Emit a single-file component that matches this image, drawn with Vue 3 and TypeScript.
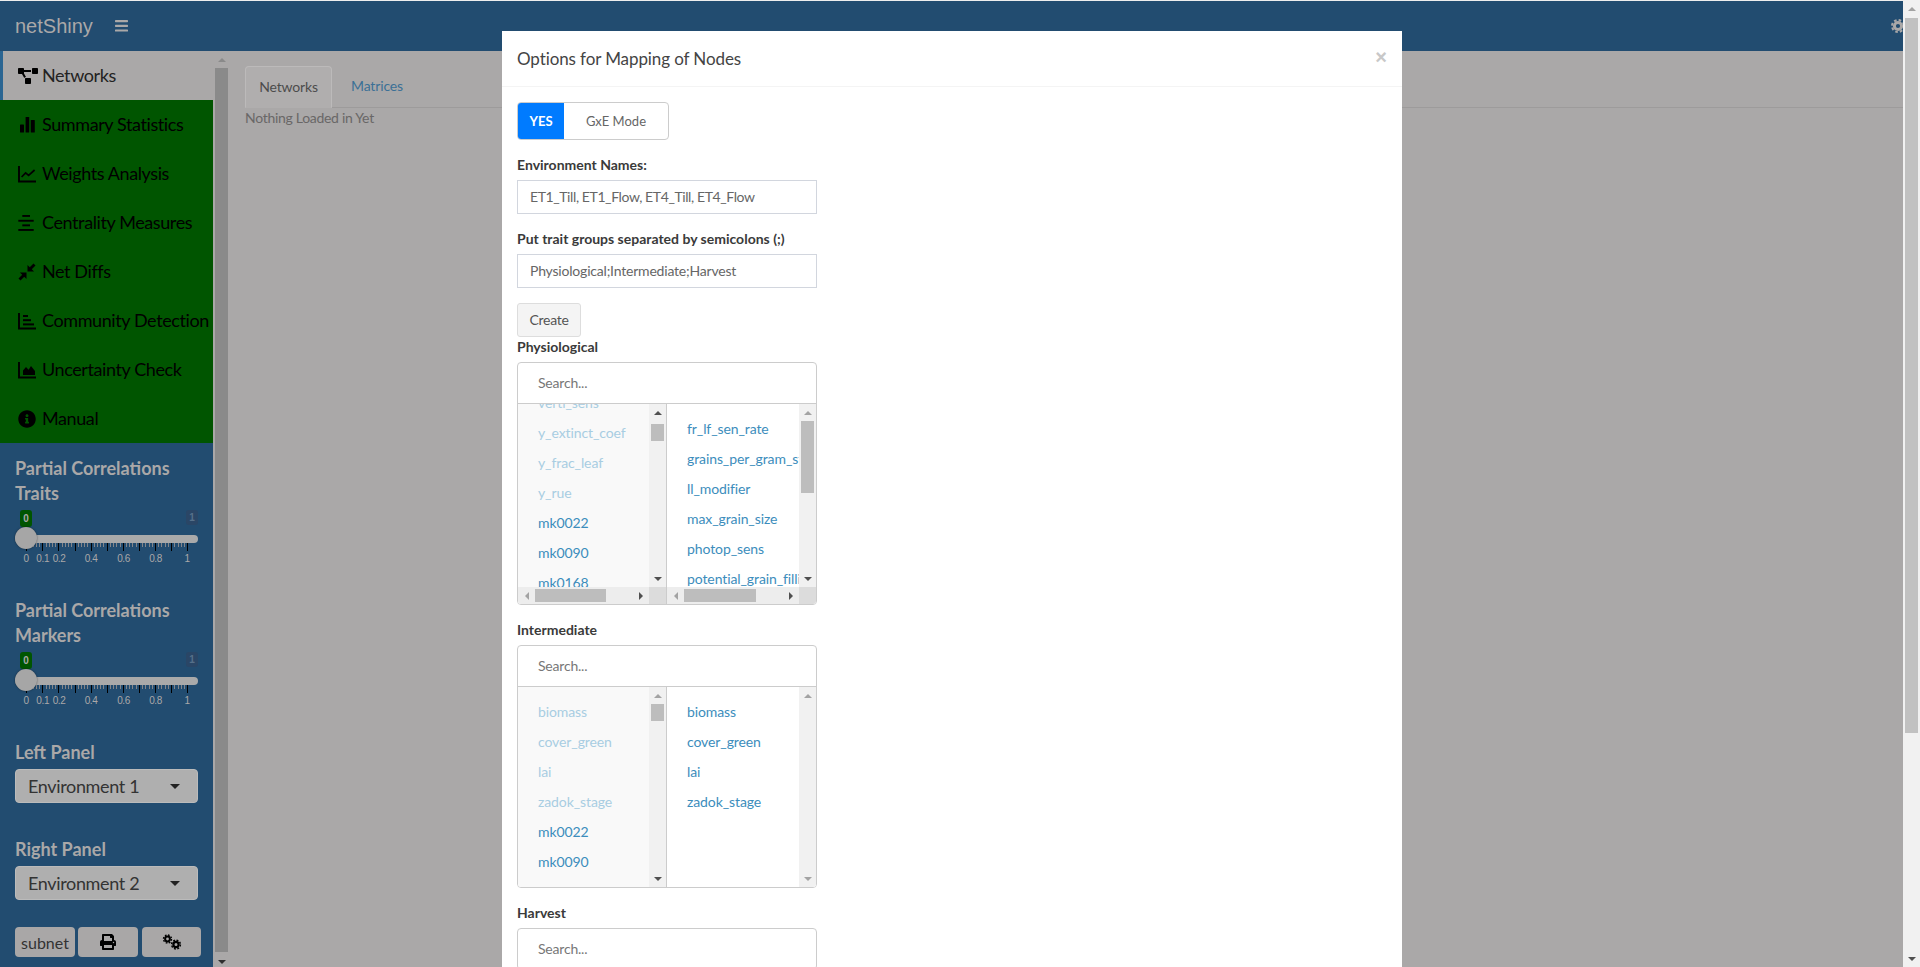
<script setup lang="ts">
interface ListCol {
  items: { label: string; off?: boolean }[];
  offset: number;
  thumbTop: number | null;
  thumbHeight: number;
  upActive: boolean;
  downActive: boolean;
  hThumbLeft?: number;
  hThumbWidth?: number;
}
interface Group {
  name: string;
  hbar: boolean;
  left: ListCol;
  right: ListCol;
}

const menu = [
  { label: 'Summary Statistics', icon: 'bars' },
  { label: 'Weights Analysis', icon: 'line' },
  { label: 'Centrality Measures', icon: 'align' },
  { label: 'Net Diffs', icon: 'compress' },
  { label: 'Community Detection', icon: 'hbars' },
  { label: 'Uncertainty Check', icon: 'area' },
  { label: 'Manual', icon: 'info' },
];

const sliderNames = [
  ['Partial Correlations', 'Traits'],
  ['Partial Correlations', 'Markers'],
];
const majorTicks = [0, 1, 2, 3, 4, 5, 6, 7, 8, 9, 10].map((i) => Math.round(11.2 + i * 16.1) + 0.5);
const minorTicks: number[] = [];
for (let i = 0; i < 10; i++) {
  for (let j = 1; j < 5; j++) minorTicks.push(Math.round(11.2 + i * 16.1 + (j * 16.1) / 5) + 0.5);
}
const tickLabels = [
  { t: '0', x: 11 },
  { t: '0.1', x: 27.7 },
  { t: '0.2', x: 44 },
  { t: '0.4', x: 76 },
  { t: '0.6', x: 108.5 },
  { t: '0.8', x: 140.5 },
  { t: '1', x: 172 },
];

const groups: Group[] = [
  {
    name: 'Physiological',
    hbar: true,
    left: {
      items: [
        { label: 'verti_sens', off: true },
        { label: 'y_extinct_coef', off: true },
        { label: 'y_frac_leaf', off: true },
        { label: 'y_rue', off: true },
        { label: 'mk0022' },
        { label: 'mk0090' },
        { label: 'mk0168' },
      ],
      offset: -16,
      thumbTop: 3,
      thumbHeight: 17,
      upActive: true,
      downActive: true,
      hThumbLeft: 0,
      hThumbWidth: 71,
    },
    right: {
      items: [
        { label: 'fr_lf_sen_rate' },
        { label: 'grains_per_gram_stem' },
        { label: 'll_modifier' },
        { label: 'max_grain_size' },
        { label: 'photop_sens' },
        { label: 'potential_grain_filling' },
      ],
      offset: 10,
      thumbTop: 0,
      thumbHeight: 72,
      upActive: false,
      downActive: true,
      hThumbLeft: 0,
      hThumbWidth: 72,
    },
  },
  {
    name: 'Intermediate',
    hbar: false,
    left: {
      items: [
        { label: 'biomass', off: true },
        { label: 'cover_green', off: true },
        { label: 'lai', off: true },
        { label: 'zadok_stage', off: true },
        { label: 'mk0022' },
        { label: 'mk0090' },
      ],
      offset: 10,
      thumbTop: 0,
      thumbHeight: 17,
      upActive: false,
      downActive: true,
    },
    right: {
      items: [
        { label: 'biomass' },
        { label: 'cover_green' },
        { label: 'lai' },
        { label: 'zadok_stage' },
      ],
      offset: 10,
      thumbTop: null,
      thumbHeight: 0,
      upActive: false,
      downActive: false,
    },
  },
];
</script>

<template>
  <div class="app">
    <div class="page">
      <div class="strip"></div>
      <header class="topbar">
        <span class="brand">netShiny</span>
        <svg class="burger" width="13" height="12" viewBox="0 0 13 12">
          <rect y="0" width="13" height="2.2" rx="0.6" />
          <rect y="4.7" width="13" height="2.2" rx="0.6" />
          <rect y="9.4" width="13" height="2.2" rx="0.6" />
        </svg>
        <svg class="topgear" width="14" height="14" viewBox="0 0 14 14">
          <circle cx="7" cy="7" r="3.6" fill="none" stroke="#aaa8a8" stroke-width="3" />
          <circle cx="7" cy="7" r="6" fill="none" stroke="#aaa8a8" stroke-width="2" stroke-dasharray="2.6 2.1" />
        </svg>
      </header>
      <div class="body">
        <aside class="sidebar">
          <nav class="menu">
            <a class="item active">
              <svg class="ico net" width="20" height="16" viewBox="0 0 640 512">
                <path d="M384 320H256c-17.67 0-32 14.33-32 32v128c0 17.67 14.33 32 32 32h128c17.67 0 32-14.33 32-32V352c0-17.67-14.33-32-32-32zM192 32c0-17.67-14.33-32-32-32H32C14.33 0 0 14.33 0 32v128c0 17.67 14.33 32 32 32h95.72l73.16 128.04C211.98 300.98 232.4 288 256 288h.28L192 175.51V128h224V64H192V32zM608 0H480c-17.67 0-32 14.33-32 32v128c0 17.67 14.33 32 32 32h128c17.67 0 32-14.33 32-32V32c0-17.67-14.33-32-32-32z" />
              </svg>
              <span>Networks</span>
            </a>
            <a v-for="m in menu" :key="m.label" class="item">
              <svg class="ico" width="18" height="18" viewBox="0 0 18 18">
                <g v-if="m.icon === 'bars'">
                  <rect x="2" y="8.5" width="4" height="8" rx="0.6" />
                  <rect x="7.6" y="1" width="3.6" height="15.5" rx="0.6" />
                  <rect x="12.8" y="4" width="4" height="12.5" rx="0.6" />
                </g>
                <g v-else-if="m.icon === 'line'">
                  <path d="M1 1v15.5h17" fill="none" stroke="#000" stroke-width="1.9" />
                  <path d="M3.6 12l4-4.2 3 2.6 6-5.4" fill="none" stroke="#000" stroke-width="1.7" />
                </g>
                <g v-else-if="m.icon === 'align'">
                  <rect x="4.3" y="1" width="7.7" height="1.9" />
                  <rect x="0.3" y="5.8" width="15.4" height="1.9" />
                  <rect x="4.3" y="10.4" width="7.7" height="1.9" />
                  <rect x="0.3" y="15" width="15.4" height="1.9" />
                </g>
                <g v-else-if="m.icon === 'compress'">
                  <path d="M1.5 16.5L6.5 11.5" stroke="#000" stroke-width="2.8" />
                  <path d="M8.5 9.5v6.6L1.9 9.5z" />
                  <path d="M11.5 6.5L16.5 1.5" stroke="#000" stroke-width="2.8" />
                  <path d="M9.5 8.5V1.9l6.6 6.6z" />
                </g>
                <g v-else-if="m.icon === 'hbars'">
                  <path d="M1 1v15.5h17" fill="none" stroke="#000" stroke-width="1.9" />
                  <rect x="5" y="3" width="5" height="2" />
                  <rect x="5" y="7.2" width="8" height="2" />
                  <rect x="5" y="11.4" width="11" height="2" />
                </g>
                <g v-else-if="m.icon === 'area'">
                  <path d="M1 1v15.5h17" fill="none" stroke="#000" stroke-width="1.9" />
                  <path d="M5 14V9.5l3-3.5 2.6 2.8L13 5l4 5v4z" />
                </g>
                <g v-else>
                  <path transform="scale(0.0352)" d="M256 8C119.043 8 8 119.083 8 256c0 136.997 111.043 248 248 248s248-111.003 248-248C504 119.083 392.957 8 256 8zm0 110c23.196 0 42 18.804 42 42s-18.804 42-42 42-42-18.804-42-42 18.804-42 42-42zm56 254c0 6.627-5.373 12-12 12h-88c-6.627 0-12-5.373-12-12v-24c0-6.627 5.373-12 12-12h12v-64h-12c-6.627 0-12-5.373-12-12v-24c0-6.627 5.373-12 12-12h64c6.627 0 12 5.373 12 12v100h12c6.627 0 12 5.373 12 12v24z" />
                </g>
              </svg>
              <span>{{ m.label }}</span>
            </a>
          </nav>
          <div class="controls">
            <div v-for="(s, idx) in sliderNames" :key="idx" class="slider-block">
              <div class="ctl-label">{{ s[0] }}<br />{{ s[1] }}</div>
              <div class="slider">
                <div class="bubbles">
                  <span class="bubble-from">0</span>
                  <span class="bubble-max">1</span>
                </div>
                <div class="track"></div>
                <svg class="ticks" width="183" height="9" viewBox="0 0 183 9">
                  <line v-for="t in minorTicks" :key="'m' + t" :x1="t" :x2="t" y1="0" y2="4" stroke="#84868a" stroke-width="1" />
                  <line v-for="t in majorTicks" :key="'M' + t" :x1="t" :x2="t" y1="0" y2="8" stroke="#000" stroke-width="1" />
                </svg>
                <div class="handle"></div>
                <div class="tick-labels">
                  <span v-for="l in tickLabels" :key="l.t" :style="{ left: l.x + 'px' }">{{ l.t }}</span>
                </div>
              </div>
            </div>
            <div class="ctl-label panel-first">Left Panel</div>
            <div class="select">
              <span>Environment 1</span><i class="caret"></i>
            </div>
            <div class="ctl-label panel-second">Right Panel</div>
            <div class="select">
              <span>Environment 2</span><i class="caret"></i>
            </div>
            <div class="buttons">
              <button class="sb-btn subnet">subnet</button>
              <button class="sb-btn b2">
                <svg width="16" height="16" viewBox="0 0 512 512">
                  <path d="M448 192V77.25c0-8.49-3.37-16.62-9.37-22.63L393.37 9.37c-6-6-14.14-9.37-22.63-9.37H96C78.33 0 64 14.33 64 32v160c-35.35 0-64 28.65-64 64v112c0 8.84 7.16 16 16 16h48v96c0 17.67 14.33 32 32 32h320c17.67 0 32-14.33 32-32v-96h48c8.84 0 16-7.16 16-16V256c0-35.35-28.65-64-64-64zm-64 256H128v-96h256v96zm0-224H128V64h192v48c0 8.84 7.16 16 16 16h48v96zm48 72c-13.25 0-24-10.75-24-24 0-13.26 10.75-24 24-24s24 10.74 24 24c0 13.25-10.75 24-24 24z" />
                </svg>
              </button>
              <button class="sb-btn b3">
                <svg width="20" height="16" viewBox="0 0 20 16">
                  <circle cx="5.5" cy="5" r="2.4" fill="none" stroke="#000" stroke-width="2" />
                  <circle cx="5.5" cy="5" r="4" fill="none" stroke="#000" stroke-width="1.4" stroke-dasharray="1.7 1.44" />
                  <circle cx="14" cy="10.5" r="2.6" fill="none" stroke="#000" stroke-width="2.2" />
                  <circle cx="14" cy="10.5" r="4.4" fill="none" stroke="#000" stroke-width="1.5" stroke-dasharray="1.9 1.56" />
                </svg>
              </button>
            </div>
          </div>
        </aside>
        <div class="side-scroll">
          <i class="arrow up faint"></i>
          <div class="side-track"><div class="side-thumb"></div></div>
          <i class="arrow down dark"></i>
        </div>
        <main class="main">
          <div class="tabs">
            <span class="tab active-tab">Networks</span>
            <span class="tab link-tab">Matrices</span>
          </div>
          <p class="nothing">Nothing Loaded in Yet</p>
        </main>
      </div>
    </div>

    <div class="page-scroll">
      <i class="sc-arrow up-g"></i>
      <div class="page-track"><div class="page-thumb"></div></div>
      <i class="sc-arrow down-d"></i>
    </div>

    <section class="modal">
      <div class="modal-head">
        <h4>Options for Mapping of Nodes</h4>
        <span class="close">×</span>
      </div>
      <div class="modal-body">
        <div class="switch">
          <span class="sw-on">YES</span>
          <span class="sw-label">GxE Mode</span>
        </div>
        <label class="lbl">Environment Names:</label>
        <div class="input tightest">ET1_Till, ET1_Flow, ET4_Till, ET4_Flow</div>
        <label class="lbl">Put trait groups separated by semicolons (;)</label>
        <div class="input">Physiological;Intermediate;Harvest</div>
        <button class="create">Create</button>
        <template v-for="g in groups" :key="g.name">
          <label class="lbl tight">{{ g.name }}</label>
          <div class="multi">
            <div class="search">Search...</div>
            <div class="cols">
              <div v-for="side in (['left', 'right'] as const)" :key="side" class="col" :class="side">
                <div class="col-top">
                  <div class="list">
                    <div class="list-inner" :style="{ marginTop: g[side].offset + 'px' }">
                      <div v-for="it in g[side].items" :key="it.label" class="opt" :class="{ off: it.off }">{{ it.label }}</div>
                    </div>
                  </div>
                  <div class="vbar">
                    <i class="tri up-t" :class="{ on: g[side].upActive }"></i>
                    <div class="vtrack">
                      <div v-if="g[side].thumbTop !== null" class="vthumb" :style="{ marginTop: g[side].thumbTop + 'px', height: g[side].thumbHeight + 'px' }"></div>
                    </div>
                    <i class="tri down-t" :class="{ on: g[side].downActive }"></i>
                  </div>
                </div>
                <div v-if="g.hbar" class="hbar">
                  <i class="tri left-t"></i>
                  <div class="htrack">
                    <div class="hthumb" :style="{ width: g[side].hThumbWidth + 'px' }"></div>
                  </div>
                  <i class="tri right-t"></i>
                  <div class="corner"></div>
                </div>
              </div>
            </div>
          </div>
        </template>
        <label class="lbl tight">Harvest</label>
        <div class="multi">
          <div class="search">Search...</div>
        </div>
      </div>
    </section>
  </div>
</template>

<style>
html, body { margin: 0; overflow: hidden; background: #aaa8a8; }
</style>

<style scoped>
.app {
  width: 1920px;
  height: 967px;
  display: flex;
  overflow: hidden;
  position: relative;
  font-family: "Lato", "Noto Sans", sans-serif;
  color: #333;
  background: #aaa8a8;
}
.page { flex: 1; min-width: 0; display: flex; flex-direction: column; }
.strip { height: 1px; background: #eeeeee; }
.topbar {
  height: 50px;
  background: #224c70;
  display: flex;
  align-items: center;
  padding-left: 15px;
  position: relative;
  overflow: hidden;
}
.brand { font-family: "Liberation Sans", Arial, sans-serif; font-size: 20px; color: #aaa8a8; width: 100px; }
.burger { fill: #aaa8a8; }
.topgear { margin-left: auto; margin-right: -2px; }
.body { flex: 1; display: flex; min-height: 0; }
.sidebar { width: 213px; background: #224c70; display: flex; flex-direction: column; flex: none; }
.menu { display: flex; flex-direction: column; background: #005500; }
.item {
  height: 49px;
  box-sizing: border-box;
  display: flex;
  align-items: center;
  padding-left: 18px;
  font-size: 18px;
  letter-spacing: -0.4px;
  color: #000;
  white-space: nowrap;
}
.item span { margin-top: -2px; }
.ico { flex: none; fill: #000; margin-right: 6px; }
.ico.net { margin-right: 4px; }
.item.active {
  background: #aaa8a8;
  color: #222;
  border-left: 3px solid #2a6592;
  padding-left: 15px;
}
.controls { padding: 13px 15px 0; display: flex; flex-direction: column; }
.slider-block { height: 142px; }
.ctl-label { font-size: 18px; line-height: 25px; font-weight: 700; color: #aaa8a8; }
.slider { position: relative; height: 70px; width: 183px; }
.bubbles { display: flex; justify-content: space-between; padding: 4px 0 0 5px; height: 17px; font-family: "Liberation Sans", Arial, sans-serif; }
.bubble-from { width: 12px; height: 17px; line-height: 17px; background: #005500; color: #aaa8a8; font-size: 10px; font-weight: 700; text-align: center; border-radius: 3px; }
.bubble-max { width: 12px; height: 15px; line-height: 15px; background: #2a4666; color: #56708a; font-size: 10px; font-weight: 700; text-align: center; border-radius: 3px; }
.track { position: absolute; left: 0; right: 0; top: 29px; height: 8px; border-radius: 4px; background: #aaaaaa; }
.handle { position: absolute; left: 0; top: 21px; width: 22px; height: 22px; border-radius: 50%; background: #a6a6a6; box-shadow: 0 0 2px rgba(0, 0, 0, .5); }
.ticks { position: absolute; left: 0; top: 37px; }
.tick-labels { position: absolute; left: 0; top: 46px; width: 183px; height: 14px; font-family: "Liberation Sans", Arial, sans-serif; font-size: 10px; letter-spacing: -0.4px; line-height: 14px; color: #aaa8a8; }
.tick-labels span { position: absolute; transform: translateX(-50%); }
.panel-first { margin-bottom: 4px; }
.select {
  height: 34px;
  box-sizing: border-box;
  background: #afafaf;
  border: 1px solid #bbb;
  border-radius: 4px;
  display: flex;
  align-items: center;
  justify-content: space-between;
  padding: 0 17px 0 12px;
  font-size: 18px;
  letter-spacing: -0.35px;
  color: #333;
}
.caret { width: 0; height: 0; border-left: 5px solid transparent; border-right: 5px solid transparent; border-top: 5px solid #222; }
.panel-second { margin-top: 34px; margin-bottom: 4px; }
.buttons { display: flex; margin-top: 27px; height: 30px; width: 186px; }
.sb-btn {
  height: 30px;
  border: none;
  border-radius: 4px;
  background: #a9a7a7;
  padding: 0;
  display: flex;
  align-items: center;
  justify-content: center;
  font-family: inherit;
  font-size: 16px;
  color: #333;
}
.subnet { width: 60px; }
.b2 { width: 60px; margin-left: 3px; }
.b3 { width: 59px; margin-left: 4px; }
.side-scroll { width: 15px; box-sizing: border-box; padding-left: 2px; flex: none; display: flex; flex-direction: column; align-items: stretch; }
.side-track { flex: 1; }
.side-thumb { height: 884px; background: #8a8a8a; }
.arrow { height: 17px; display: flex; }
.arrow::after { content: ""; margin: auto; width: 0; height: 0; border-left: 4px solid transparent; border-right: 4px solid transparent; }
.arrow.up::after { border-bottom: 4px solid #8a8a8a; }
.arrow.down { height: 10px; }
.arrow.down::after { border-top: 4px solid #2e2e2e; }
.main { flex: 1; padding: 15px 0 0 17px; min-width: 0; }
.tabs { display: flex; height: 42px; box-sizing: border-box; border-bottom: 1px solid #9d9b9b; }
.tab { font-size: 14px; height: 42px; box-sizing: border-box; line-height: 40px; padding: 0 16px; letter-spacing: -0.15px; }
.active-tab { background: #b0aeae; border: 1px solid #bcbaba; border-bottom-color: #b0aeae; border-radius: 4px 4px 0 0; color: #4c4c4c; width: 87px; text-align: center; padding: 0; }
.link-tab { color: #3b7096; margin-left: 3px; }
.nothing { margin: 0; font-size: 14px; line-height: 20px; color: #696767; letter-spacing: -0.3px; }

.page-scroll { width: 17px; background: #f1f1f1; display: flex; flex-direction: column; flex: none; }
.sc-arrow { height: 17px; display: flex; }
.sc-arrow::after { content: ""; margin: auto; width: 0; height: 0; border-left: 4px solid transparent; border-right: 4px solid transparent; }
.up-g::after { border-bottom: 4px solid #a3a3a3; }
.down-d::after { border-top: 4px solid #505050; }
.page-track { flex: 1; padding: 1px 2px 0; }
.page-thumb { height: 715px; background: #c1c1c1; }

.modal {
  position: absolute;
  left: 502px;
  top: 31px;
  width: 900px;
  height: 936px;
  background: #fff;
  overflow: hidden;
}
.modal-head {
  height: 56px;
  box-sizing: border-box;
  border-bottom: 1px solid #f4f4f4;
  display: flex;
  align-items: center;
  justify-content: space-between;
  padding: 0 15px;
}
.modal-head h4 { margin: 0; font-size: 17px; font-weight: 400; color: #444; letter-spacing: -0.1px; }
.close { font-size: 20px; font-weight: 700; color: #c8c8c8; font-family: "Liberation Sans", Arial, sans-serif; margin-top: -3px; }
.modal-body { padding: 15px 15px 0; display: flex; flex-direction: column; align-items: flex-start; }
.switch {
  height: 38px;
  width: 152px;
  box-sizing: border-box;
  border: 1px solid #ccc;
  border-radius: 4px;
  display: flex;
  overflow: hidden;
  font-size: 13px;
  line-height: 36px;
  text-align: center;
}
.sw-on { width: 46px; background: #007bff; color: #fff; font-weight: 700; }
.sw-label { flex: 1; color: #666; }
.lbl { display: block; font-size: 14px; font-weight: 700; line-height: 20px; margin: 15px 0 5px; color: #3a3a3a; }
.lbl.tight { margin-top: 0; }
.input {
  width: 300px;
  height: 34px;
  box-sizing: border-box;
  border: 1px solid #d2d6de;
  padding: 0 12px;
  font-size: 14px;
  line-height: 32px;
  color: #666;
  letter-spacing: -0.2px;
}
.input.tightest { letter-spacing: -0.4px; }
.create {
  margin-top: 15px;
  width: 64px;
  height: 34px;
  box-sizing: border-box;
  border: 1px solid #ddd;
  border-radius: 3px;
  background: #f4f4f4;
  font-family: inherit;
  font-size: 14px;
  letter-spacing: -0.3px;
  color: #555;
  padding: 0 0 2px;
}
.multi {
  width: 300px;
  box-sizing: border-box;
  border: 1px solid #ccc;
  border-radius: 4px;
  margin-bottom: 15px;
  overflow: hidden;
}
.search { height: 40px; box-sizing: border-box; padding: 0 20px; font-size: 14px; line-height: 40px; color: #777; letter-spacing: -0.2px; }
.cols { display: flex; height: 200px; border-top: 1px solid #ccc; }
.col { width: 149px; box-sizing: border-box; display: flex; flex-direction: column; }
.col.left { background: #f9f9f9; border-right: 1px solid #ccc; }
.col.right { background: #fff; }
.col-top { flex: 1; display: flex; min-height: 0; }
.list { flex: 1; overflow: hidden; min-width: 0; }
.opt { height: 30px; line-height: 30px; padding-left: 20px; font-size: 14px; letter-spacing: -0.1px; color: #3c8dbc; white-space: nowrap; }
.opt.off { color: #a8cde2; }
.vbar { width: 17px; background: #f1f1f1; display: flex; flex-direction: column; flex: none; }
.tri { display: flex; flex: none; height: 17px; width: 17px; }
.tri::after { content: ""; margin: auto; width: 0; height: 0; }
.up-t::after { border-left: 4px solid transparent; border-right: 4px solid transparent; border-bottom: 4px solid #a3a3a3; }
.down-t::after { border-left: 4px solid transparent; border-right: 4px solid transparent; border-top: 4px solid #a3a3a3; }
.up-t.on::after { border-bottom-color: #505050; }
.down-t.on::after { border-top-color: #505050; }
.left-t::after { border-top: 4px solid transparent; border-bottom: 4px solid transparent; border-right: 4px solid #a3a3a3; }
.right-t::after { border-top: 4px solid transparent; border-bottom: 4px solid transparent; border-left: 4px solid #505050; }
.vtrack { flex: 1; padding: 0 2px; }
.vthumb { background: #bdbdbd; }
.hbar { height: 17px; display: flex; background: #ededed; flex: none; }
.htrack { flex: 1; padding: 2px 0; min-width: 0; }
.hthumb { height: 13px; background: #bdbdbd; }
.corner { width: 17px; background: #dcdcdc; flex: none; }
</style>
